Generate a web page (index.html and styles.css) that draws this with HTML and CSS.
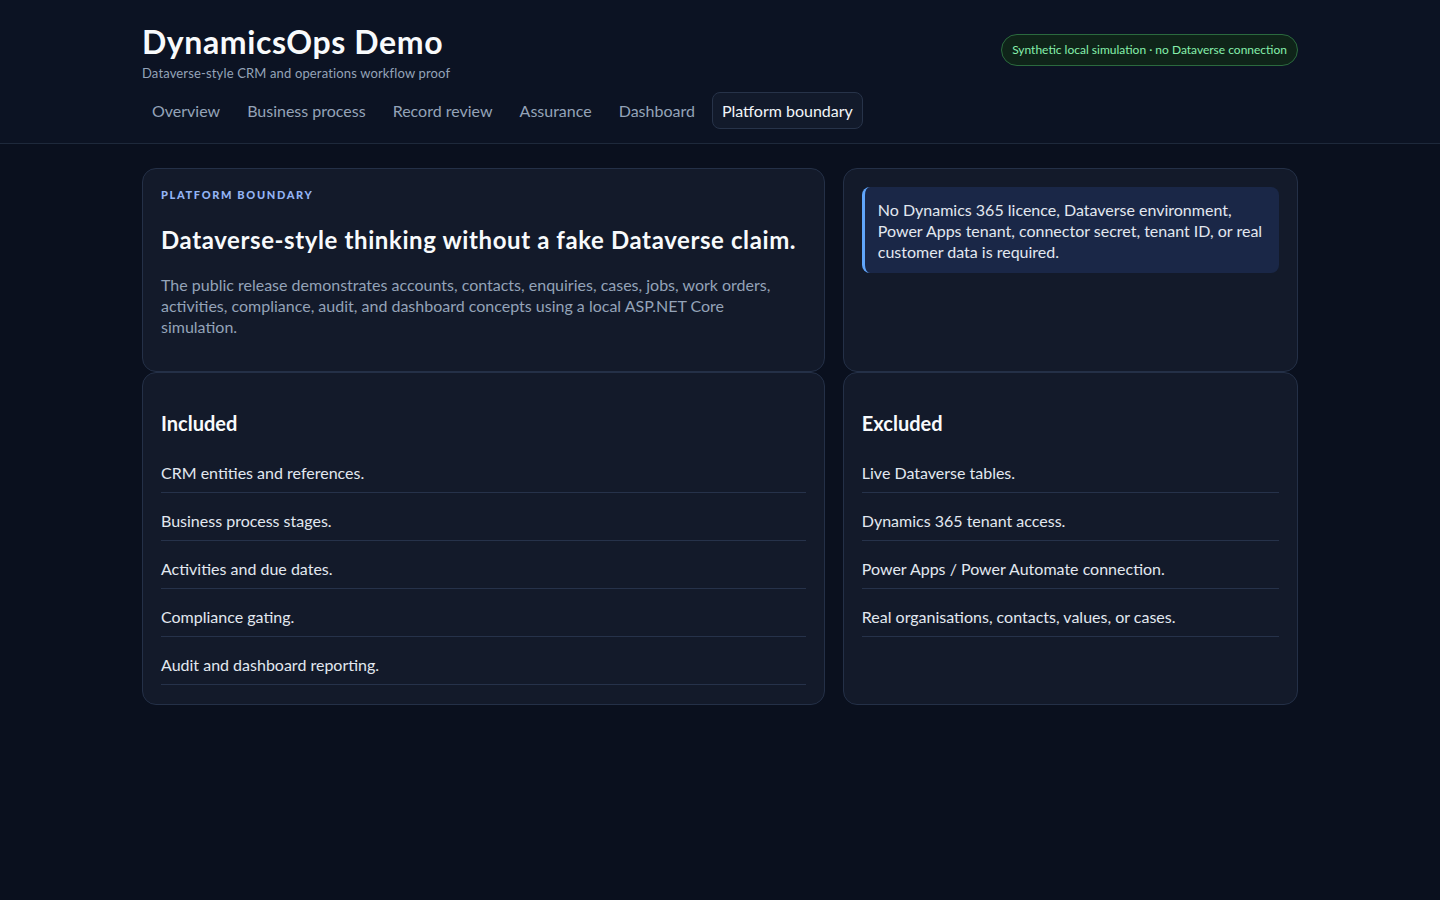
FILE: index.html
```html
<!DOCTYPE html>
<html lang="en">

<head>
    <meta charset="utf-8">
    <meta name="viewport" content="width=device-width, initial-scale=1.0">
    <title>DynamicsOps Demo</title>

    <link rel="stylesheet" href="styles.css">
</head>

<body>

    <header class="topbar">
        <div class="wrap">
            <div class="brand-row">
                <div class="brand">
                    <h1>DynamicsOps Demo</h1>
                    <p>Dataverse-style CRM and operations workflow proof</p>
                </div>
                <span class="badge">Synthetic local simulation · no Dataverse connection</span>
            </div>
            <nav class="tabs">
                <a href="#" class="tab">Overview</a>
                <a href="#" class="tab">Business process</a>
                <a href="#" class="tab">Record review</a>
                <a href="#" class="tab">Assurance</a>
                <a href="#" class="tab">Dashboard</a>
                <a href="#" class="tab valgt">Platform boundary</a>
            </nav>
        </div>
    </header>

    <main class="wrap grid">
        <section class="card">
            <p class="eyebrow">Platform boundary</p>
            <h2>Dataverse-style thinking without a fake Dataverse claim.</h2>
            <p class="lead">The public release demonstrates accounts, contacts, enquiries, cases, jobs, work orders, activities, compliance, audit, and dashboard concepts using a local ASP.NET Core simulation.</p>
        </section>

        <section class="card">
            <div class="note">No Dynamics 365 licence, Dataverse environment, Power Apps tenant, connector secret, tenant ID, or real customer data is required.</div>
        </section>

        <section class="card list-card">
            <h3>Included</h3>
            <ul class="liste">
                <li>CRM entities and references.</li>
                <li>Business process stages.</li>
                <li>Activities and due dates.</li>
                <li>Compliance gating.</li>
                <li>Audit and dashboard reporting.</li>
            </ul>
        </section>

        <section class="card list-card">
            <h3>Excluded</h3>
            <ul class="liste">
                <li>Live Dataverse tables.</li>
                <li>Dynamics 365 tenant access.</li>
                <li>Power Apps / Power Automate connection.</li>
                <li>Real organisations, contacts, values, or cases.</li>
            </ul>
        </section>
    </main>

</body>

</html>
```

FILE: styles.css
```css
* {
    box-sizing: border-box;
}

body {
    margin: 0;
    background-color: #0a101e;
    color: #e2e8f0;
    font-family: "Segoe UI", Lato, "Noto Sans", sans-serif;
    font-size: 16px;
}

.wrap {
    width: 1156px;
    margin: 0 auto;
}

/* header */

.topbar {
    background-color: #0c1323;
    border-bottom: 1px solid #1e293b;
    padding: 22px 0 14px;
}

.brand-row {
    display: flex;
    justify-content: space-between;
    align-items: center;
}

.brand h1 {
    margin: 0;
    font-size: 32px;
    line-height: 40px;
    font-weight: 700;
    letter-spacing: 0.6px;
    color: #f8fafc;
}

.brand p {
    margin: 2px 0 0;
    font-size: 13px;
    line-height: 18px;
    letter-spacing: 0.15px;
    color: #94a3b8;
}

.badge {
    border: 1px solid #2b6a3e;
    background-color: #0f2419;
    color: #86efac;
    font-size: 12px;
    line-height: 30px;
    padding: 0 10px;
    border-radius: 999px;
    margin-bottom: 5px;
}

.tabs {
    display: flex;
    gap: 7px;
    margin-top: 10px;
}

.tab {
    color: #94a3b8;
    text-decoration: none;
    padding: 8px 9px;
    line-height: 19px;
    border: 1px solid transparent;
    border-radius: 8px;
}

.tab.valgt {
    color: #f1f5f9;
    background-color: #121a2b;
    border-color: #273349;
}

/* content */

.grid {
    display: grid;
    grid-template-columns: 3fr 2fr;
    column-gap: 18px;
    margin-top: 24px;
}

.card {
    background-color: #131a2a;
    border: 1px solid #243047;
    border-radius: 14px;
    padding: 18px;
}

.list-card {
    padding-bottom: 19px;
}

.eyebrow {
    margin: 0;
    font-size: 11px;
    line-height: 16px;
    font-weight: 900;
    letter-spacing: 0.15em;
    text-transform: uppercase;
    color: #93b4f5;
}

.card h2 {
    margin: 22px 0 19px;
    font-size: 24px;
    line-height: 30px;
    font-weight: 700;
    letter-spacing: 0.6px;
    color: #f8fafc;
}

.lead {
    max-width: 620px;
    margin: 0 0 16px;
    line-height: 21px;
    color: #94a3b8;
}

.note {
    background-color: #1a2747;
    border-left: 3px solid #60a5fa;
    border-radius: 8px;
    padding: 12px 14px 11px 13px;
    line-height: 21px;
    color: #e2e8f0;
}

.card h3 {
    margin: 19px 0 9px;
    font-size: 20px;
    line-height: 26px;
    font-weight: 700;
    color: #f8fafc;
}

.liste {
    list-style: none;
    margin: 0;
    padding: 0;
}

.liste li {
    padding: 16px 0 7px;
    line-height: 24px;
    border-bottom: 1px solid #26324a;
}
```
